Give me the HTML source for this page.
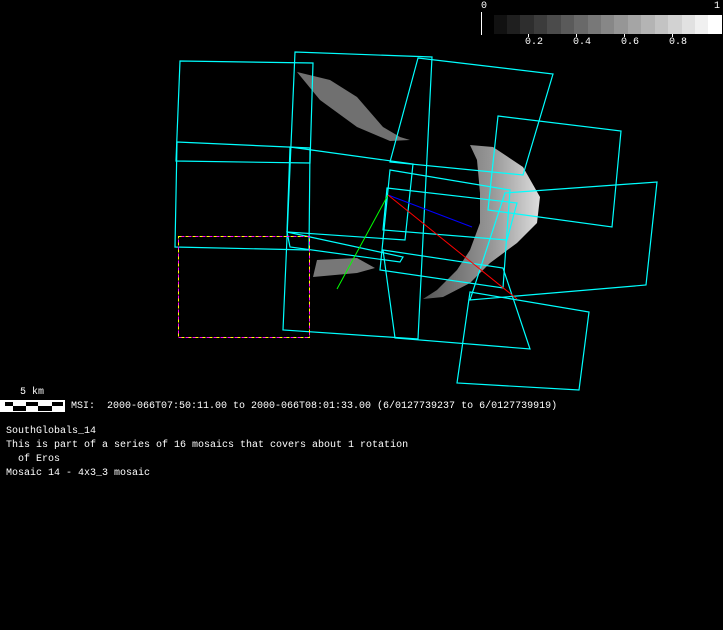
<!DOCTYPE html>
<html><head><style>
body{margin:0;background:#000;width:723px;height:630px;overflow:hidden;position:relative;font-family:"Liberation Mono","DejaVu Sans Mono",monospace;font-size:10px;color:#fff}
.t{position:absolute;white-space:pre;line-height:12px}
</style></head><body>
<svg width="723" height="630" style="position:absolute;left:0;top:0">
<defs><linearGradient id="g" x1="0" y1="0" x2="1" y2="0"><stop offset="0" stop-color="#555"/><stop offset=".6" stop-color="#999"/><stop offset="1" stop-color="#ddd"/></linearGradient></defs>
<!-- colorbar -->
<g>
<rect x="494" y="15" width="14" height="19" fill="#111"/><rect x="507" y="15" width="14" height="19" fill="#1f1f1f"/><rect x="520" y="15" width="14" height="19" fill="#2e2e2e"/><rect x="534" y="15" width="14" height="19" fill="#3c3c3c"/><rect x="547" y="15" width="14" height="19" fill="#4b4b4b"/><rect x="561" y="15" width="14" height="19" fill="#5a5a5a"/><rect x="574" y="15" width="14" height="19" fill="#696969"/><rect x="588" y="15" width="14" height="19" fill="#787878"/><rect x="601" y="15" width="14" height="19" fill="#878787"/><rect x="614" y="15" width="14" height="19" fill="#969696"/><rect x="628" y="15" width="14" height="19" fill="#a5a5a5"/><rect x="641" y="15" width="14" height="19" fill="#b4b4b4"/><rect x="655" y="15" width="14" height="19" fill="#c3c3c3"/><rect x="668" y="15" width="14" height="19" fill="#d2d2d2"/><rect x="682" y="15" width="14" height="19" fill="#e1e1e1"/><rect x="695" y="15" width="14" height="19" fill="#f0f0f0"/><rect x="708" y="15" width="14" height="19" fill="#fff"/>
<line x1="481.5" y1="12" x2="481.5" y2="35" stroke="#fff"/>
<g stroke="#fff"><line x1="528.5" y1="34" x2="528.5" y2="37"/><line x1="576.5" y1="34" x2="576.5" y2="37"/><line x1="624.5" y1="34" x2="624.5" y2="37"/><line x1="672.5" y1="34" x2="672.5" y2="37"/></g>
</g>
<!-- asteroid -->
<polygon points="297,72 330,80 357,97 383,127 400,137 410,140 390,141 357,127 320,100" fill="#707070"/>
<polygon points="317,260 357,258 375,268 357,273 313,277" fill="#777"/>
<polygon points="470,145 493,147 523,167 540,197 537,223 517,243 490,263 470,283 443,297 423,299 437,290 457,270 470,250 480,223 480,193 477,160" fill="url(#g)"/>
<!-- frames -->
<g fill="none" stroke="#0ff" stroke-width="1.2">
<polygon points="180,61 313,63 310,163 176,161"/>
<polygon points="177,142 310,148 309,250 175,247"/>
<polygon points="295,52 432,57 418,339 283,330"/>
<polygon points="418,58 553,74 523,175 390,162"/>
<polygon points="290,147 413,164 405,240 287,232"/>
<polygon points="390,170 510,190 503,288 380,270"/>
<polygon points="387,188 517,203 507,240 383,230"/>
<polygon points="383,250 503,268 530,349 395,338"/>
<polygon points="498,116 621,131 612,227 488,210"/>
<polygon points="505,193 657,182 646,285 470,300"/>
<polygon points="470,292 589,312 579,390 457,383"/>
<polygon points="287,232 403,257 400,262 290,247"/>
</g>
<rect x="178.5" y="236.5" width="131" height="101" fill="none" stroke="#ff0" stroke-dasharray="4 3"/>
<rect x="178.5" y="236.5" width="131" height="101" fill="none" stroke="#f0f" stroke-dasharray="3 4" stroke-dashoffset="4"/>
<!-- axes -->
<line x1="388" y1="195" x2="337" y2="289" stroke="#0f0"/>
<line x1="388" y1="195" x2="472" y2="227" stroke="#00f"/>
<line x1="388" y1="195" x2="517" y2="299" stroke="#f00"/>
<!-- scale bar -->
<rect x="0" y="400" width="65" height="12" fill="#fff"/>
<g fill="#000"><rect x="5" y="402" width="8" height="4"/><rect x="26" y="402" width="12" height="4"/><rect x="52" y="402" width="11" height="4"/><rect x="13" y="406" width="13" height="5"/><rect x="38" y="406" width="14" height="5"/></g>
</svg>
<div class="t" style="left:481px;top:1px">0</div>
<div class="t" style="left:714px;top:1px">1</div>
<div class="t" style="left:525px;top:37px">0.2</div>
<div class="t" style="left:573px;top:37px">0.4</div>
<div class="t" style="left:621px;top:37px">0.6</div>
<div class="t" style="left:669px;top:37px">0.8</div>
<div class="t" style="left:20px;top:387px">5 km</div>
<div class="t" style="left:71px;top:401px">MSI:  2000-066T07:50:11.00 to 2000-066T08:01:33.00 (6/0127739237 to 6/0127739919)</div>
<div class="t" style="left:6px;top:425px;line-height:14px">SouthGlobals_14
This is part of a series of 16 mosaics that covers about 1 rotation
  of Eros
Mosaic 14 - 4x3_3 mosaic</div>
</body></html>
